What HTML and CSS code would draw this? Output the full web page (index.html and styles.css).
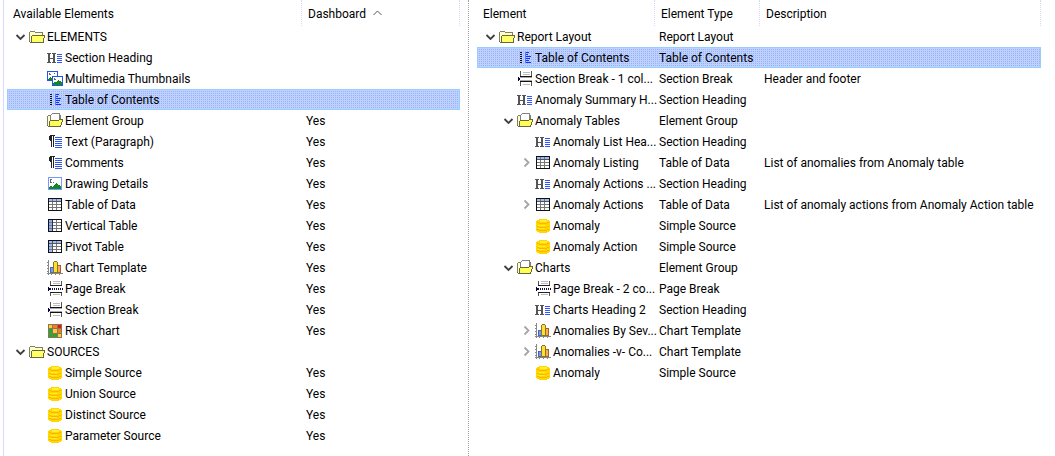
FILE: index.html
```html
<!DOCTYPE html>
<html lang="en">
<head>
  <meta charset="UTF-8">
  <meta name="viewport" content="width=device-width, initial-scale=1.0">
  <title>Report Layout</title>
  <link rel="stylesheet" href="styles.css">
</head>
<body>
  <!-- icon set -->
  <svg class="sprite" aria-hidden="true">
    <symbol id="i-down" viewBox="0 0 18 17">
      <path d="M5.5 7l4 4 4-4" fill="none" stroke="#404040" stroke-width="1.8"/>
    </symbol>
    <symbol id="i-right" viewBox="0 0 18 17">
      <path d="M7.500 4.500l4 4-4 4" fill="none" stroke="#a6a6a6" stroke-width="1.8"/>
    </symbol>
    <symbol id="i-folder" viewBox="0 0 16 17">
      <path d="M.5 13.500v-9l1-1h4l1 1h7v3" fill="#ffffcc" stroke="#808060"/>
      <path d="M.5 13.500l1 1h13v-1l1-6h-12l-1 1v5" fill="#ffff66" stroke="#666640"/>
    </symbol>
    <symbol id="i-group" viewBox="0 0 16 17">
      <path d="M.5 13.500v-9l1-1h12v4" fill="#ffffcc" stroke="#808060"/>
      <path d="M3.500 8v-4.500l2-2h7v7" fill="#fff" stroke="#808080"/>
      <path d="M.5 13.500l1 1h12l2-6v-1h-3l-1 1h-8l-1 1v4" fill="#ffff55" stroke="#666640"/>
    </symbol>
    <symbol id="i-heading" viewBox="0 0 16 17">
      <path d="M0 4h4v1h-1v4h3v-4h-1v-1h4v1h-1v8h1v1h-4v-1h1v-3h-3v3h1v1h-4v-1h1v-8h-1z" fill="#555"/>
      <path d="M2 5v8M7 5v8" stroke="#555" stroke-width="2"/>
      <path d="M10 5.500h5M10 7.500h5M10 9.500h5M10 11.500h5M10 13.500h5" stroke="#3355ff"/>
    </symbol>
    <symbol id="i-media" viewBox="0 0 16 17">
      <path d="M.5 1.500h10v9h-10z" fill="#fff" stroke="#2255ee"/>
      <path d="M1 10V9l2-2 1 1 2-2v4z" fill="#118822"/>
      <path d="M2 3h1v1h1v1H2zM7 3h1v1H7z" fill="#667"/>
      <path d="M5.500 6.500h10v9h-10z" fill="#fff" stroke="#2255ee"/>
      <path d="M6 15v-2l2-1 1 1 2-3 1 1 1-1 2 3v2z" fill="#118822"/>
      <path d="M7 8h1v1h1v1H7z" fill="#667"/>
    </symbol>
    <symbol id="i-toc" viewBox="0 0 16 17">
      <path d="M3.500 3v12" stroke="#111" stroke-dasharray="1 1" stroke-width="2"/>
      <path d="M8 3.500h4M8 5.500h3M8 7.500h6M8 9.500h5M8 11.500h4M8 13.500h6" stroke="#1133ff"/>
      <path d="M8.500 3v11" stroke="#5577ff"/>
    </symbol>
    <symbol id="i-para" viewBox="0 0 16 17">
      <path d="M4 2h4v1h-1v11h-1v-11h-1v11h-1v-6h-1l-1-1v-4l1-1z" fill="#222"/>
      <path d="M8 4.500h7M8 6.500h7M8 8.500h7M8 10.500h7M8 12.500h7M8 14.500h7" stroke="#3355ee"/>
    </symbol>
    <symbol id="i-picture" viewBox="0 0 16 17">
      <path d="M1.500 2.500h13v12h-13z" fill="#fff" stroke="#7799ff"/>
      <path d="M2 14v-2l2-1 2 1 3-4 2 2 1-1 2 3v2z" fill="#118822"/>
      <path d="M3 4h2v1H4v2h1v1H3z" fill="#667"/>
      <path d="M6 7h1v1H6z" fill="#667"/>
    </symbol>
    <symbol id="i-table" viewBox="0 0 16 17">
      <path d="M1.500 2.500h13v12h-13z" fill="#fff"/>
      <path d="M2 3h12v3H2z" fill="#99bbff"/>
      <path d="M2 8.500h12M2 11.500h12M5.500 3v11M9.500 3v11" stroke="#777"/>
      <path d="M2 5.500h12" stroke="#555"/>
      <path d="M1.500 2.500h13v12h-13z" fill="none" stroke="#111"/>
    </symbol>
    <symbol id="i-vtable" viewBox="0 0 16 17">
      <path d="M1.500 2.500h13v12h-13z" fill="#fff"/>
      <path d="M2 3h3v11H2z" fill="#88aaff"/>
      <path d="M2 5.500h12M2 8.500h12M2 11.500h12M9.500 3v11" stroke="#777"/>
      <path d="M5.500 3v11" stroke="#333"/>
      <path d="M1.500 2.500h13v12h-13z" fill="none" stroke="#111"/>
    </symbol>
    <symbol id="i-pivot" viewBox="0 0 16 17">
      <path d="M1.500 2.500h13v12h-13z" fill="#fff"/>
      <path d="M2 3h12v3H5v8H2z" fill="#99bbff"/>
      <path d="M2 8.500h12M2 11.500h12M9.500 3v11" stroke="#777"/>
      <path d="M2 5.500h12M5.500 3v11" stroke="#555"/>
      <path d="M1.500 2.500h13v12h-13z" fill="none" stroke="#111"/>
    </symbol>
    <symbol id="i-chart" viewBox="0 0 16 17">
      <path d="M1.500 1v14.500M0 14.500h16" fill="none" stroke="#888"/>
      <path d="M0 3.500h1M0 6.500h1M0 9.500h1M0 12.500h1M4.500 15v1M8.500 15v1M12.500 15v1" stroke="#888"/>
      <path d="M3.500 8.500h3v5h-3z" fill="#7799ff" stroke="#4466bb"/>
      <path d="M10.500 6.500h3v7h-3z" fill="#ffaa55" stroke="#996633"/>
      <path d="M6.500 3.500l1-1h2l1 1v10h-4z" fill="#ffdd33" stroke="#887722"/>
    </symbol>
    <symbol id="i-page" viewBox="0 0 16 17">
      <path d="M4 1h10v5H4zM4 12h10v4H4z" fill="#fff"/>
      <path d="M3.500 1v5M14.500 1v5M3.500 12v4M14.500 12v4" stroke="#555"/>
      <path d="M6 1.500h7M6 3.500h7M6 14.500h7" stroke="#bbb"/>
      <path d="M3 5.500h12M3 12.500h12" stroke="#222"/>
      <path d="M3 9h13" stroke="#111133" stroke-width="2" stroke-dasharray="1 1"/>
      <path d="M1 7v4l2-2z" fill="#000055"/>
    </symbol>
    <symbol id="i-section" viewBox="0 0 16 17">
      <path d="M4 1h10v5H4zM4 12h10v4H4z" fill="#fff"/>
      <path d="M3.500 1v5M14.500 1v5M3.500 12v4M14.500 12v4" stroke="#555"/>
      <path d="M6 2.500h7M6 4.500h7M6 14.500h7" stroke="#bbb"/>
      <path d="M3 6.500h12M3 11.500h12" stroke="#111"/>
      <path d="M3 7.500h12M3 10.500h12" stroke="#aaa"/>
      <path d="M1 7v4l2-2z" fill="#000055"/>
    </symbol>
    <symbol id="i-risk" viewBox="0 0 16 17">
      <path d="M1 2h14v14H1z" fill="#887755"/>
      <path d="M2 3h3v3H2zM6 7h4v4H6zM11 12h3v3h-3z" fill="#ffcc33"/>
      <path d="M6 3h4v3H6zM11 7h3v4h-3z" fill="#ff7722"/>
      <path d="M11 3h3v3h-3z" fill="#ee1111"/>
      <path d="M2 7h3v4H2zM2 12h3v3H2zM6 12h4v3H6z" fill="#22aa33"/>
    </symbol>
    <symbol id="i-source" viewBox="0 0 16 17">
      <path d="M1 4l2-1 2-1h6l2 1 2 1v10l-2 1-2 1H5l-2-1-2-1z" fill="#ffd800"/>
      <path d="M3 4l3-1h5l2 1-2 1H6z" fill="#ffee33"/>
      <path d="M2 5.500h2M4 6.500h8M12 5.500h2M2 9.500h2M4 10.500h8M12 9.500h2M2 12.500h2M4 13.500h8M12 12.500h2" stroke="#ffb300"/>
      <path d="M3 8.500h7M3 11.500h7" stroke="#ffee22"/>
    </symbol>
  </svg>

  <main class="panes">
    <section class="pane pane-available">
      <table class="tree">
        <colgroup><col><col class="col-dashboard"></colgroup>
        <thead>
          <tr>
            <th>Available Elements</th>
            <th aria-sort="ascending"><button class="sort">Dashboard <svg class="caret" viewBox="0 0 9 6"><path d="M.5 5l4-4 4 4" fill="none" stroke="#555"/></svg></button></th>
          </tr>
        </thead>
        <tbody>
          <tr><td><div class="node"><button class="toggle" aria-label="Collapse"><svg><use href="#i-down"/></svg></button><svg class="icon"><use href="#i-folder"/></svg><span>ELEMENTS</span></div></td><td></td></tr>
          <tr><td><div class="node level-2"><svg class="icon"><use href="#i-heading"/></svg><span>Section Heading</span></div></td><td></td></tr>
          <tr><td><div class="node level-2"><svg class="icon"><use href="#i-media"/></svg><span>Multimedia Thumbnails</span></div></td><td></td></tr>
          <tr class="selected"><td><div class="node level-2"><svg class="icon"><use href="#i-toc"/></svg><span>Table of Contents</span></div></td><td></td></tr>
          <tr><td><div class="node level-2"><svg class="icon"><use href="#i-group"/></svg><span>Element Group</span></div></td><td>Yes</td></tr>
          <tr><td><div class="node level-2"><svg class="icon"><use href="#i-para"/></svg><span>Text (Paragraph)</span></div></td><td>Yes</td></tr>
          <tr><td><div class="node level-2"><svg class="icon"><use href="#i-para"/></svg><span>Comments</span></div></td><td>Yes</td></tr>
          <tr><td><div class="node level-2"><svg class="icon"><use href="#i-picture"/></svg><span>Drawing Details</span></div></td><td>Yes</td></tr>
          <tr><td><div class="node level-2"><svg class="icon"><use href="#i-table"/></svg><span>Table of Data</span></div></td><td>Yes</td></tr>
          <tr><td><div class="node level-2"><svg class="icon"><use href="#i-vtable"/></svg><span>Vertical Table</span></div></td><td>Yes</td></tr>
          <tr><td><div class="node level-2"><svg class="icon"><use href="#i-pivot"/></svg><span>Pivot Table</span></div></td><td>Yes</td></tr>
          <tr><td><div class="node level-2"><svg class="icon"><use href="#i-chart"/></svg><span>Chart Template</span></div></td><td>Yes</td></tr>
          <tr><td><div class="node level-2"><svg class="icon"><use href="#i-page"/></svg><span>Page Break</span></div></td><td>Yes</td></tr>
          <tr><td><div class="node level-2"><svg class="icon"><use href="#i-section"/></svg><span>Section Break</span></div></td><td>Yes</td></tr>
          <tr><td><div class="node level-2"><svg class="icon"><use href="#i-risk"/></svg><span>Risk Chart</span></div></td><td>Yes</td></tr>
          <tr><td><div class="node"><button class="toggle" aria-label="Collapse"><svg><use href="#i-down"/></svg></button><svg class="icon"><use href="#i-folder"/></svg><span>SOURCES</span></div></td><td></td></tr>
          <tr><td><div class="node level-2"><svg class="icon"><use href="#i-source"/></svg><span>Simple Source</span></div></td><td>Yes</td></tr>
          <tr><td><div class="node level-2"><svg class="icon"><use href="#i-source"/></svg><span>Union Source</span></div></td><td>Yes</td></tr>
          <tr><td><div class="node level-2"><svg class="icon"><use href="#i-source"/></svg><span>Distinct Source</span></div></td><td>Yes</td></tr>
          <tr><td><div class="node level-2"><svg class="icon"><use href="#i-source"/></svg><span>Parameter Source</span></div></td><td>Yes</td></tr>
        </tbody>
      </table>
    </section>

    <section class="pane pane-layout">
      <table class="tree">
        <colgroup><col class="col-element"><col class="col-type"><col></colgroup>
        <thead>
          <tr><th>Element</th><th>Element Type</th><th>Description</th></tr>
        </thead>
        <tbody>
          <tr><td><div class="node"><button class="toggle" aria-label="Collapse"><svg><use href="#i-down"/></svg></button><svg class="icon"><use href="#i-folder"/></svg><span>Report Layout</span></div></td><td>Report Layout</td><td></td></tr>
          <tr class="selected"><td><div class="node level-2"><svg class="icon"><use href="#i-toc"/></svg><span>Table of Contents</span></div></td><td>Table of Contents</td><td></td></tr>
          <tr><td><div class="node level-2"><svg class="icon"><use href="#i-section"/></svg><span>Section Break - 1 col...</span></div></td><td>Section Break</td><td>Header and footer</td></tr>
          <tr><td><div class="node level-2"><svg class="icon"><use href="#i-heading"/></svg><span>Anomaly Summary H...</span></div></td><td>Section Heading</td><td></td></tr>
          <tr><td><div class="node level-2"><button class="toggle" aria-label="Collapse"><svg><use href="#i-down"/></svg></button><svg class="icon"><use href="#i-group"/></svg><span>Anomaly Tables</span></div></td><td>Element Group</td><td></td></tr>
          <tr><td><div class="node level-3"><svg class="icon"><use href="#i-heading"/></svg><span>Anomaly List Hea...</span></div></td><td>Section Heading</td><td></td></tr>
          <tr><td><div class="node level-3"><button class="toggle" aria-label="Expand"><svg><use href="#i-right"/></svg></button><svg class="icon"><use href="#i-table"/></svg><span>Anomaly Listing</span></div></td><td>Table of Data</td><td>List of anomalies from Anomaly table</td></tr>
          <tr><td><div class="node level-3"><svg class="icon"><use href="#i-heading"/></svg><span>Anomaly Actions ...</span></div></td><td>Section Heading</td><td></td></tr>
          <tr><td><div class="node level-3"><button class="toggle" aria-label="Expand"><svg><use href="#i-right"/></svg></button><svg class="icon"><use href="#i-table"/></svg><span>Anomaly Actions</span></div></td><td>Table of Data</td><td>List of anomaly actions from Anomaly Action table</td></tr>
          <tr><td><div class="node level-3"><svg class="icon"><use href="#i-source"/></svg><span>Anomaly</span></div></td><td>Simple Source</td><td></td></tr>
          <tr><td><div class="node level-3"><svg class="icon"><use href="#i-source"/></svg><span>Anomaly Action</span></div></td><td>Simple Source</td><td></td></tr>
          <tr><td><div class="node level-2"><button class="toggle" aria-label="Collapse"><svg><use href="#i-down"/></svg></button><svg class="icon"><use href="#i-group"/></svg><span>Charts</span></div></td><td>Element Group</td><td></td></tr>
          <tr><td><div class="node level-3"><svg class="icon"><use href="#i-page"/></svg><span>Page Break - 2 co...</span></div></td><td>Page Break</td><td></td></tr>
          <tr><td><div class="node level-3"><svg class="icon"><use href="#i-heading"/></svg><span>Charts Heading 2</span></div></td><td>Section Heading</td><td></td></tr>
          <tr><td><div class="node level-3"><button class="toggle" aria-label="Expand"><svg><use href="#i-right"/></svg></button><svg class="icon"><use href="#i-chart"/></svg><span>Anomalies By Sev...</span></div></td><td>Chart Template</td><td></td></tr>
          <tr><td><div class="node level-3"><button class="toggle" aria-label="Expand"><svg><use href="#i-right"/></svg></button><svg class="icon"><use href="#i-chart"/></svg><span>Anomalies -v- Co...</span></div></td><td>Chart Template</td><td></td></tr>
          <tr><td><div class="node level-3"><svg class="icon"><use href="#i-source"/></svg><span>Anomaly</span></div></td><td>Simple Source</td><td></td></tr>
        </tbody>
      </table>
    </section>
  </main>
</body>
</html>
```

FILE: styles.css
```css
* {
  box-sizing: border-box;
}
body {
  margin: 0;
  background-color: #fff;
  color: #000;
  font-family: 'Segoe UI', Roboto, 'Open Sans', sans-serif;
  font-size: 12px;
  line-height: 19px;
}
.sprite {
  display: none;
}
.panes {
  display: grid;
  grid-template-columns: 465fr 587fr;
  min-height: 100vh;
  padding-left: 3px;
}
.pane {
  min-width: 0;
}
.pane-available {
  border-left: 1px solid #d9d9ff;
  padding: 0 8px 0 3px;
}
.pane-layout {
  border-left: 1px dotted #a0a0b0;
  padding: 0 14px 0 8px;
}

/* tree tables */
.tree {
  width: 100%;
  table-layout: fixed;
  border-collapse: separate;
  border-spacing: 0;
}
.col-dashboard {
  width: 158px;
}
.col-element {
  width: 178px;
}
.col-type {
  width: 105px;
}
th {
  height: 26px;
  padding: 3px 6px 0;
  border-right: 1px dotted #d8d8f4;
  font-weight: normal;
  text-align: left;
  white-space: nowrap;
}
td {
  height: 21px;
  padding: 2px 0 0 4px;
  white-space: nowrap;
}
.node {
  display: flex;
  align-items: flex-start;
  height: 19px;
  gap: 2px;
  padding-left: 18px;
}
.level-2 {
  padding-left: 36px;
}
.level-3 {
  padding-left: 54px;
}
.icon {
  flex: none;
  width: 16px;
  height: 17px;
  shape-rendering: crispEdges;
}
.toggle {
  flex: none;
  width: 18px;
  height: 17px;
  margin-left: -18px;
  margin-right: -2px;
  padding: 0;
  border: 0;
  background: none;
  cursor: pointer;
}
.toggle svg {
  display: block;
  width: 18px;
  height: 17px;
}
.sort {
  padding: 0;
  border: 0;
  background: none;
  color: inherit;
  font: inherit;
  cursor: pointer;
}
.caret {
  width: 9px;
  height: 6px;
  margin-left: 4px;
  vertical-align: 2px;
}

/* selected row */
.selected {
  background: conic-gradient(at 1px 1px, #b8d4ff 75%, #a8a8ff 0) 0 0 / 2px 2px;
}
.selected td {
  box-shadow: inset 0 1px #99ccff, inset 0 -1px #99ccff;
}
.selected td:first-child {
  box-shadow: inset 0 1px #99ccff, inset 0 -1px #99ccff, inset 1px 0 #99ccff;
}
.selected td:last-child {
  box-shadow: inset 0 1px #99ccff, inset 0 -1px #99ccff, inset -1px 0 #99ccff;
}
```
